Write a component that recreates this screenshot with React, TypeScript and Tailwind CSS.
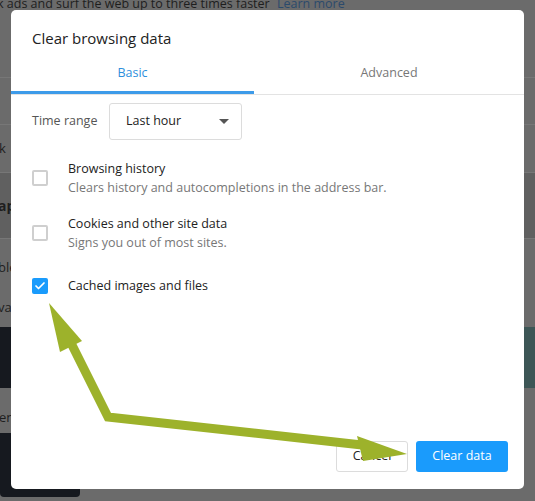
import { Check } from 'lucide-react';

const FONT = { fontFamily: '"Open Sans", "Noto Sans", sans-serif' };

function Box({ checked }: { checked?: boolean }) {
  if (checked) {
    return (
      <div className="w-4 h-4 shrink-0 rounded-[2px] bg-[#1a9bfc] flex items-center justify-center">
        <Check size={12} strokeWidth={3.5} className="text-white" />
      </div>
    );
  }
  return <div className="w-4 h-4 shrink-0 rounded-[2px] border-2 border-[#cfcfcf] bg-white" />;
}

function Option({ title, hint, checked }: { title: string; hint?: string; checked?: boolean }) {
  return (
    <div className="flex items-center gap-5">
      <Box checked={checked} />
      <div className="flex flex-col">
        <span className="text-[12.5px] leading-[19px] text-[#222]">{title}</span>
        {hint && <span className="text-[12.5px] leading-[19px] text-[#777]">{hint}</span>}
      </div>
    </div>
  );
}

// dimmed page behind the modal
function Backdrop() {
  return (
    <div className="flex flex-col h-full text-[13px] text-[#1e1e1e]">
      <div className="h-[78px] border-b border-[#777]">
        <div className="-mt-[5px] -ml-[3px] text-[12.5px] leading-[18px] whitespace-nowrap">
          k ads and surf the web up to three times faster <span className="ml-1 text-[#2b4a6c]">Learn more</span>
        </div>
      </div>
      <div className="h-[47px] border-b border-[#777]" />
      <div className="h-[48px] border-b border-[#777] flex items-center -ml-[1px]">k</div>
      <div className="h-[66px] bg-[#606060] border-b border-[#777] flex items-center font-bold text-[14px] -ml-[2px]">
        ap
      </div>
      <div className="h-[88px] flex flex-col pt-[19px] gap-[22px] -ml-[2px]">
        <span className="leading-[18px]">ble</span>
        <span className="leading-[18px]">va</span>
      </div>
      <div className="h-[61px] flex">
        <div className="w-[80px] bg-[#16191f]" />
        <div className="flex-1" />
        <div className="w-[60px] bg-[#3d5656]" />
      </div>
      <div className="h-[45px] flex items-center pt-[14px] -ml-[1px]">en</div>
      <div className="h-[64px]">
        <div className="w-[80px] h-full bg-[#16191f] rounded-b-[4px]" />
      </div>
    </div>
  );
}

export default function App() {
  return (
    <div className="relative w-[535px] h-[501px] overflow-hidden bg-[#6b6b6b]" style={FONT}>
      <Backdrop />

      {/* dialog */}
      <div className="absolute left-[11px] top-[10px] w-[513px] h-[479px] bg-white rounded-[5px] flex flex-col">
        <div className="px-[21px] pt-[18px] text-[15px] leading-[20px] text-[#222]">Clear browsing data</div>

        <div className="mt-[9px] flex border-b border-[#e3e3e3]">
          <div className="w-[243px] h-[37px] flex items-center justify-center text-[12.5px] text-[#2e8fdc] border-b-[3px] border-[#3d9be9] pb-[2px]">
            Basic
          </div>
          <div className="flex-1 h-[37px] flex items-center justify-center text-[12.5px] text-[#777] pb-[5px]">
            Advanced
          </div>
        </div>

        <div className="mt-[8px] px-[21px] flex items-center">
          <span className="w-[77px] text-[12.5px] text-[#555]">Time range</span>
          <div className="w-[133px] h-[37px] border border-[#dcdcdc] rounded-[3px] flex items-center justify-between pl-[16px] pr-[12px]">
            <span className="text-[12.5px] text-[#222]">Last hour</span>
            <svg width="10" height="5" viewBox="0 0 10 5">
              <polygon points="0,0 10,0 5,5" fill="#555" />
            </svg>
          </div>
        </div>

        <div className="px-[21px] mt-[19px] flex flex-col">
          <Option title="Browsing history" hint="Clears history and autocompletions in the address bar." />
          <div className="mt-[17px]">
            <Option title="Cookies and other site data" hint="Signs you out of most sites." />
          </div>
          <div className="mt-[24px]">
            <Option title="Cached images and files" checked />
          </div>
        </div>

        <div className="mt-auto pb-[17px] pr-[16px] flex justify-end gap-2">
          <button className="w-[72px] h-[31px] border border-[#dcdcdc] rounded-[3px] bg-white text-[12.5px] text-[#222]">
            Cancel
          </button>
          <button className="w-[92px] h-[31px] rounded-[3px] bg-[#1a9bfc] text-[12.5px] text-white">
            Clear data
          </button>
        </div>
      </div>

      {/* annotation arrows */}
      <svg className="absolute inset-0 pointer-events-none" width="535" height="501" viewBox="0 0 535 501">
        <polyline points="72,345 108,417 362,445" fill="none" stroke="#9db22b" strokeWidth="9" strokeLinejoin="miter" />
        <polygon points="49,303 82,341 60,352" fill="#9db22b" />
        <polygon points="357,436 407,454 363,461" fill="#9db22b" />
      </svg>
    </div>
  );
}
